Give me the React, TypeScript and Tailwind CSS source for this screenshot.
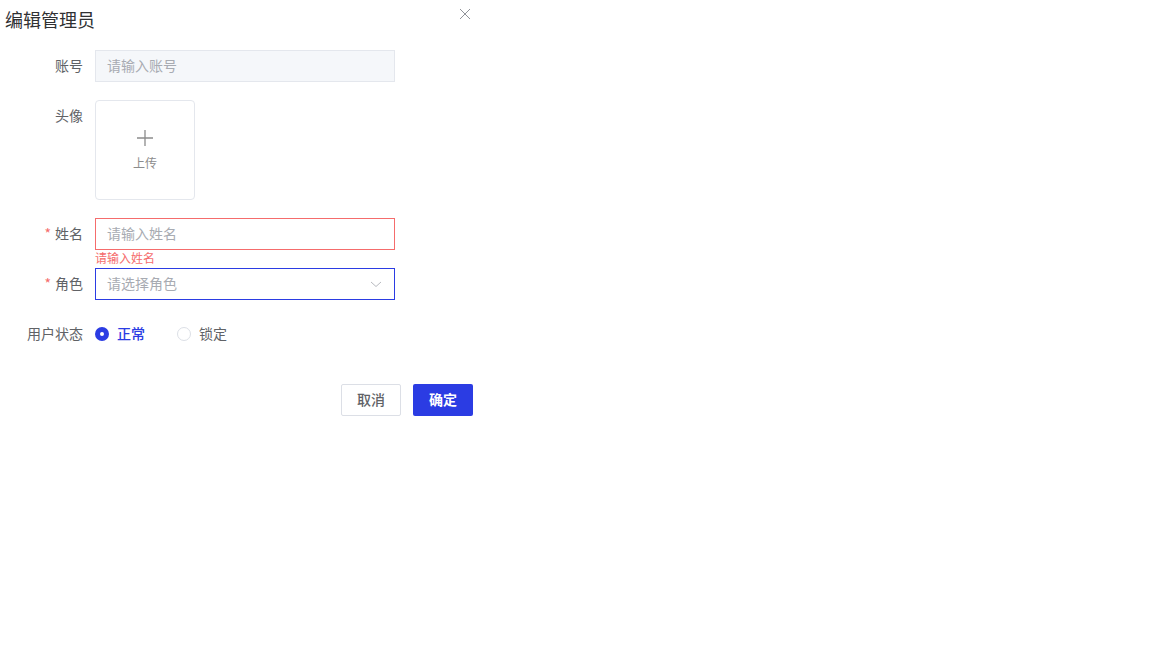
import React from "react";

const font = { fontFamily: '"Noto Sans CJK SC", "Noto Sans", sans-serif' };

function Label({ children, required }: { children: React.ReactNode; required?: boolean }) {
  return (
    <div className="w-[83px] shrink-0 flex justify-end items-center h-[32px] pb-[2px] text-[14px] text-[#606266]">
      {required && <span className="text-[#f56c6c] mr-[4px]">*</span>}
      {children}
    </div>
  );
}

export default function App() {
  return (
    <div className="w-[1152px] h-[648px] bg-white relative" style={font}>
      <div className="w-[480px] relative">
        <div className="h-[40px] flex items-center pl-[5px] pb-[1px] text-[18px] text-[#303133]">编辑管理员</div>
        <button className="absolute left-[459px] top-[8px] w-[12px] h-[12px] flex items-center justify-center">
          <svg width="12" height="12" viewBox="0 0 12 12">
            <path d="M1 1 L11 11 M11 1 L1 11" stroke="#909399" strokeWidth="1" />
          </svg>
        </button>

        <div className="flex flex-col mt-[10px]">
          <div className="flex gap-[12px] mb-[18px]">
            <Label>账号</Label>
            <div className="w-[300px] h-[32px] border border-[#e4e7ed] bg-[#f5f7fa] flex items-center px-[11px] pb-[2px] text-[14px] text-[#a8abb2]">
              请输入账号
            </div>
          </div>

          <div className="flex gap-[12px] mb-[18px]">
            <Label>头像</Label>
            <div className="w-[100px] h-[100px] border border-[#e4e7ed] rounded-[4px] flex flex-col items-center justify-center pt-[2px]">
              <svg width="18" height="18" viewBox="0 0 18 18" className="mt-[-2px]">
                <path d="M9 1 V17 M1 9 H17" stroke="#8c8c8c" strokeWidth="1.3" />
              </svg>
              <div className="text-[12px] text-[#8c8c8c] mt-[8px] leading-[16px]">上传</div>
            </div>
          </div>

          <div className="flex gap-[12px]">
            <Label required>姓名</Label>
            <div className="flex flex-col">
              <div className="w-[300px] h-[32px] border border-[#f56c6c] flex items-center px-[11px] pb-[2px] text-[14px] text-[#a8abb2]">
                请输入姓名
              </div>
              <div className="text-[12px] text-[#f56c6c] h-[18px] leading-[16px]">请输入姓名</div>
            </div>
          </div>

          <div className="flex gap-[12px] mb-[18px]">
            <Label required>角色</Label>
            <div className="w-[300px] h-[32px] border border-[#2b3ce3] flex items-center justify-between pl-[11px] pr-[12px] text-[14px] text-[#a8abb2]">
              <span className="pb-[2px]">请选择角色</span>
              <svg width="12" height="12" viewBox="0 0 12 12">
                <path d="M1 4 L6 8.5 L11 4" stroke="#b8bac0" strokeWidth="1" fill="none" />
              </svg>
            </div>
          </div>

          <div className="flex gap-[12px] items-center h-[32px]">
            <Label>用户状态</Label>
            <div className="flex items-center text-[14px]">
              <span className="w-[14px] h-[14px] rounded-full bg-[#2b3ce3] flex items-center justify-center">
                <span className="w-[4px] h-[4px] rounded-full bg-white" />
              </span>
              <span className="ml-[8px] pb-[2px] text-[#2b3ce3] font-medium">正常</span>
              <span className="ml-[32px] w-[14px] h-[14px] rounded-full border border-[#dcdfe6] bg-white" />
              <span className="ml-[8px] pb-[2px] text-[#606266]">锁定</span>
            </div>
          </div>

          <div className="flex justify-end gap-[12px] mt-[34px] pr-[7px]">
            <button className="w-[60px] h-[32px] pb-[2px] border border-[#dcdfe6] rounded-[2px] text-[14px] text-[#606266] bg-white font-medium">
              取消
            </button>
            <button className="w-[60px] h-[32px] pb-[2px] rounded-[2px] text-[14px] text-white bg-[#2b3ce3] font-bold">
              确定
            </button>
          </div>
        </div>
      </div>
    </div>
  );
}
